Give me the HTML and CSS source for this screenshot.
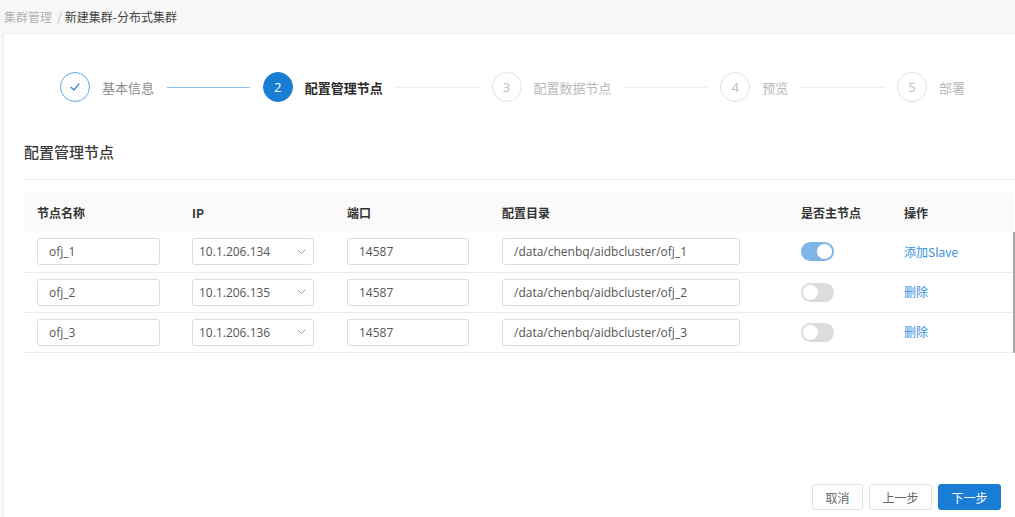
FILE: index.html
```html
<!DOCTYPE html>
<html lang="zh">
<head>
<meta charset="utf-8">
<title>新建集群-分布式集群</title>
<link rel="stylesheet" href="styles.css">
</head>
<body>
<div class="topbar">
  <span class="crumb-link">集群管理</span>
  <span class="crumb-sep">/</span>
  <span class="crumb-current">新建集群-分布式集群</span>
</div>
<div class="card">
  <div class="steps">
    <div class="step-icon done">
      <svg width="12" height="12" viewBox="0 0 12 12"><path d="M2 6.3 L4.9 9 L10 3" fill="none" stroke="#2f86d6" stroke-width="1.2" stroke-linecap="round" stroke-linejoin="round"/></svg>
    </div>
    <div class="step-title done">基本信息</div>
    <div class="step-line done"></div>
    <div class="step-icon active">2</div>
    <div class="step-title active">配置管理节点</div>
    <div class="step-line"></div>
    <div class="step-icon">3</div>
    <div class="step-title">配置数据节点</div>
    <div class="step-line"></div>
    <div class="step-icon">4</div>
    <div class="step-title">预览</div>
    <div class="step-line"></div>
    <div class="step-icon">5</div>
    <div class="step-title">部署</div>
  </div>

  <div class="section-title">配置管理节点</div>
  <div class="divider"></div>

  <table class="grid">
    <colgroup>
      <col class="c-name"><col class="c-ip"><col class="c-port"><col class="c-dir"><col class="c-master"><col class="c-op">
    </colgroup>
    <thead>
      <tr><th>节点名称</th><th>IP</th><th>端口</th><th>配置目录</th><th>是否主节点</th><th>操作</th></tr>
    </thead>
    <tbody>
      <tr>
        <td><div class="input w-name">ofj_1</div></td>
        <td><div class="input select w-ip">10.1.206.134<svg class="chev" width="9" height="6" viewBox="0 0 9 6"><path d="M0.8 0.8 L4.5 4.6 L8.2 0.8" fill="none" stroke="#9a9a9a" stroke-width="1"/></svg></div></td>
        <td><div class="input w-port">14587</div></td>
        <td><div class="input w-dir">/data/chenbq/aidbcluster/ofj_1</div></td>
        <td><span class="switch on"><span class="knob"></span></span></td>
        <td class="op"><span class="link">添加Slave</span></td>
      </tr>
      <tr>
        <td><div class="input w-name">ofj_2</div></td>
        <td><div class="input select w-ip">10.1.206.135<svg class="chev" width="9" height="6" viewBox="0 0 9 6"><path d="M0.8 0.8 L4.5 4.6 L8.2 0.8" fill="none" stroke="#9a9a9a" stroke-width="1"/></svg></div></td>
        <td><div class="input w-port">14587</div></td>
        <td><div class="input w-dir">/data/chenbq/aidbcluster/ofj_2</div></td>
        <td><span class="switch"><span class="knob"></span></span></td>
        <td class="op"><span class="link">删除</span></td>
      </tr>
      <tr>
        <td><div class="input w-name">ofj_3</div></td>
        <td><div class="input select w-ip">10.1.206.136<svg class="chev" width="9" height="6" viewBox="0 0 9 6"><path d="M0.8 0.8 L4.5 4.6 L8.2 0.8" fill="none" stroke="#9a9a9a" stroke-width="1"/></svg></div></td>
        <td><div class="input w-port">14587</div></td>
        <td><div class="input w-dir">/data/chenbq/aidbcluster/ofj_3</div></td>
        <td><span class="switch"><span class="knob"></span></span></td>
        <td class="op"><span class="link">删除</span></td>
      </tr>
    </tbody>
  </table>

  <div class="footer">
    <button class="btn">取消</button>
    <button class="btn wide">上一步</button>
    <button class="btn wide primary">下一步</button>
  </div>
</div>
</body>
</html>
```

FILE: styles.css
```css
* { box-sizing: border-box; }
html, body { margin: 0; padding: 0; }
body {
  width: 1015px;
  height: 517px;
  overflow: hidden;
  background: #f7f7f7;
  font-family: "Open Sans", "Noto Sans CJK SC", sans-serif;
  font-size: 12px;
  color: #333;
  display: flex;
  flex-direction: column;
}
.topbar {
  height: 33px;
  display: flex;
  align-items: center;
  padding-left: 4px;
  font-family: "Noto Sans CJK SC", sans-serif;
  font-size: 12px;
}
.crumb-link { color: #b3b3b3; }
.crumb-sep { color: #c0c0c0; margin: 0 3px 0 5px; }
.crumb-current { color: #444; }

.card {
  flex: 1;
  margin-left: 3px;
  background: #fff;
  border-left: 1px solid #e9e9e9;
  border-top: 1px solid #efefef;
  border-top-left-radius: 3px;
  padding: 0 14px 7px 20px;
  display: flex;
  flex-direction: column;
}

.steps {
  margin: 38px 36px 0 36px;
  height: 30px;
  display: flex;
  align-items: center;
  font-family: "Noto Sans CJK SC", sans-serif;
}
.step-icon {
  width: 30px;
  height: 30px;
  flex: none;
  border-radius: 50%;
  border: 1px solid #e3e3e3;
  color: #bdbdbd;
  display: flex;
  align-items: center;
  justify-content: center;
  font-family: "Open Sans", sans-serif;
  font-size: 13px;
}
.step-icon.done { border-color: #5fa5e6; }
.step-icon.active { background: #1a7dd5; border-color: #1a7dd5; color: #fff; }
.step-title {
  margin-left: 12px;
  font-size: 13px;
  color: #b9b9b9;
  white-space: nowrap;
}
.step-title.done { color: #8a8a8a; }
.step-title.active { color: #2b2b2b; font-weight: 700; }
.step-line {
  flex: 1;
  height: 1px;
  background: #ececec;
  margin: 0 13px;
}
.step-line.done { background: #8dbfec; }

.section-title {
  margin-top: 39px;
  height: 22px;
  line-height: 22px;
  font-family: "Noto Sans CJK SC", sans-serif;
  font-size: 15px;
  font-weight: 500;
  color: #3a3a3a;
}
.divider {
  margin-top: 16px;
  margin-right: -14px;
  height: 1px;
  background: #ebebeb;
}

.grid {
  margin-top: 13px;
  margin-right: -14px;
  width: 991px;
  border-collapse: collapse;
  table-layout: fixed;
}
.c-name, .c-ip, .c-port { width: 155px; }
.c-dir { width: 299px; }
.c-master { width: 103px; }
.grid th {
  height: 39px;
  background: #fafafa;
  text-align: left;
  padding: 0 0 0 13px;
  font-family: "Noto Sans CJK SC", sans-serif;
  font-weight: 700;
  font-size: 12px;
  color: #333;
}
.grid td {
  height: 40px;
  padding: 0 0 0 13px;
  border-bottom: 1px solid #ebebeb;
  vertical-align: middle;
}
.grid td.op { border-right: 2px solid #a8a8a8; }

.input {
  height: 27px;
  border: 1px solid #dcdcdc;
  border-radius: 3px;
  padding: 0 11px;
  display: flex;
  align-items: center;
  color: #555;
  font-size: 12px;
  white-space: nowrap;
}
.w-name { width: 123px; }
.w-ip { width: 122px; }
.w-port { width: 122px; }
.w-dir { width: 238px; }
.select { justify-content: space-between; padding-right: 7px; padding-left: 6px; }
.chev { flex: none; }

.switch {
  display: inline-flex;
  align-items: center;
  width: 33px;
  height: 19px;
  border-radius: 10px;
  background: #dcdcdc;
  padding: 2px;
  vertical-align: middle;
}
.switch .knob {
  width: 15px;
  height: 15px;
  border-radius: 50%;
  background: #fff;
}
.switch.on { background: #7db5e8; justify-content: flex-end; }

.link {
  color: #3a8ee0;
  font-family: "Noto Sans CJK SC", sans-serif;
  font-size: 12px;
}

.footer {
  margin-top: auto;
  display: flex;
  justify-content: flex-end;
  gap: 6px;
}
.btn {
  height: 26px;
  width: 51px;
  border: 1px solid #e2e2e2;
  border-radius: 3px;
  background: #fff;
  color: #666;
  font-family: "Noto Sans CJK SC", sans-serif;
  font-size: 12px;
  padding: 0;
}
.btn.wide { width: 63px; }
.btn.primary { background: #1a7dd5; border-color: #1a7dd5; color: #fff; }
```
